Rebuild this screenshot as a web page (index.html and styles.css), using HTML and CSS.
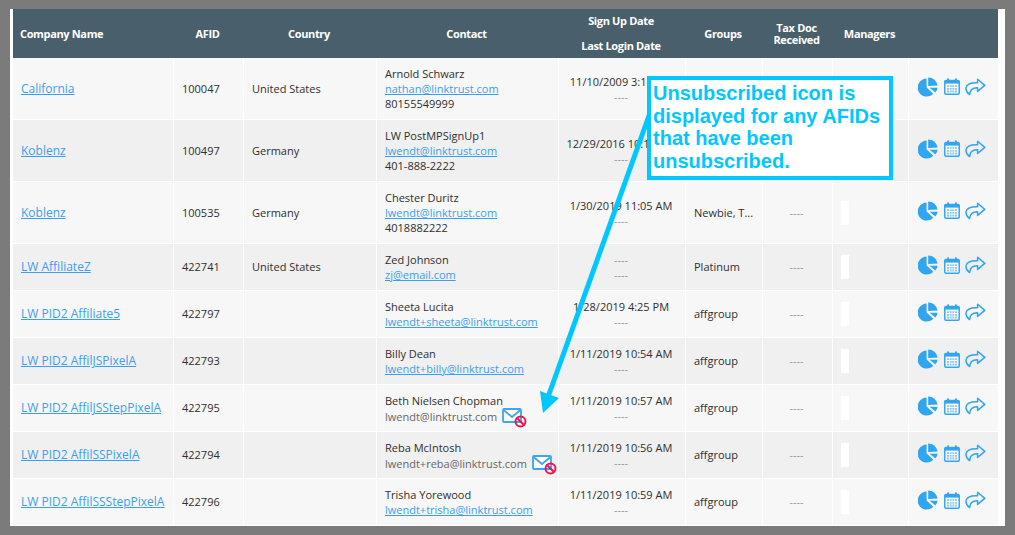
FILE: index.html
```html
<!DOCTYPE html>
<html lang="en">
<head>
<meta charset="utf-8">
<title>Affiliates</title>
<link rel="stylesheet" href="styles.css">
</head>
<body>
<svg class="defs" width="0" height="0" aria-hidden="true">
  <symbol id="i-pie" viewBox="0 0 20 20">
    <path d="M8.6 10.6V1.6A9 9 0 1 0 15.3 16.7Z"/>
    <path d="M10.2 0.4A9.2 9.2 0 0 1 19.6 8.6L10.2 9Z"/>
    <path d="M11.6 10.8H19.6A9 9 0 0 1 17.4 15.6Z"/>
  </symbol>
  <symbol id="i-cal" viewBox="0 0 16 17">
    <rect class="cal-frame" x="0.8" y="2.6" width="14.4" height="13.6" rx="1.2"/>
    <rect x="0.8" y="2.6" width="14.4" height="3"/>
    <rect x="3.2" y="0.4" width="1.8" height="3"/>
    <rect x="11" y="0.4" width="1.8" height="3"/>
    <path class="cal-grid" d="M3 7.2h10v1.8H3zM3 9.9h10v1.8H3zM3 12.6h10v1.8H3z"/>
    <path class="cal-lines" d="M5.5 7v7.6M8 7v7.6M10.5 7v7.6"/>
  </symbol>
  <symbol id="i-share" viewBox="0 0 21 18">
    <path class="share" d="M12.6 1.2L19.8 7.4L12.6 13.4V9.8C8.2 9.6 5 11 4.6 16.6C1.8 14.6 0.8 12.4 1 10C1.5 6.2 6 4.6 12.6 4.8Z"/>
  </symbol>
  <symbol id="i-env" viewBox="0 0 20 15">
    <rect class="env" x="1" y="1" width="18" height="13" rx="1"/>
    <path class="env" d="M1.5 2L10 9L18.5 2"/>
  </symbol>
  <symbol id="i-ban" viewBox="0 0 12 12">
    <circle class="ban" cx="6" cy="6" r="4.6"/>
    <path class="ban" d="M3 3L9 9"/>
  </symbol>
</svg>
<main class="frame">
  <table class="grid">
    <colgroup>
      <col class="c1"><col class="c2"><col class="c3"><col class="c4"><col class="c5"><col class="c6"><col class="c7"><col class="c8"><col class="c9">
    </colgroup>
    <thead>
      <tr>
        <th class="left">Company Name</th>
        <th>AFID</th>
        <th>Country</th>
        <th>Contact</th>
        <th class="dates"><div>Sign Up Date</div><div>Last Login Date</div></th>
        <th>Groups</th>
        <th class="tax">Tax Doc<br>Received</th>
        <th>Managers</th>
        <th></th>
      </tr>
    </thead>
    <tbody>
      <tr class="tall">
        <td><a class="co" href="#">California</a></td><td>100047</td><td>United States</td>
        <td><div>Arnold Schwarz</div><a href="#">nathan@linktrust.com</a><div>80155549999</div></td>
        <td class="ctr"><div>11/10/2009 3:15 PM</div><div class="dash">----</div></td>
        <td></td><td class="ctr dash">----</td><td><span class="mgr"></span></td>
        <td class="acts"><svg class="pie"><use href="#i-pie"/></svg><svg class="cal"><use href="#i-cal"/></svg><svg class="shr"><use href="#i-share"/></svg></td>
      </tr>
      <tr class="tall">
        <td><a class="co" href="#">Koblenz</a></td><td>100497</td><td>Germany</td>
        <td><div>LW PostMPSignUp1</div><a href="#">lwendt@linktrust.com</a><div>401-888-2222</div></td>
        <td class="ctr"><div>12/29/2016 10:15 AM</div><div class="dash">----</div></td>
        <td></td><td class="ctr dash">----</td><td><span class="mgr"></span></td>
        <td class="acts"><svg class="pie"><use href="#i-pie"/></svg><svg class="cal"><use href="#i-cal"/></svg><svg class="shr"><use href="#i-share"/></svg></td>
      </tr>
      <tr class="tall">
        <td><a class="co" href="#">Koblenz</a></td><td>100535</td><td>Germany</td>
        <td><div>Chester Duritz</div><a href="#">lwendt@linktrust.com</a><div>4018882222</div></td>
        <td class="ctr"><div>1/30/2019 11:05 AM</div><div class="dash">----</div></td>
        <td>Newbie, T...</td><td class="ctr dash">----</td><td><span class="mgr"></span></td>
        <td class="acts"><svg class="pie"><use href="#i-pie"/></svg><svg class="cal"><use href="#i-cal"/></svg><svg class="shr"><use href="#i-share"/></svg></td>
      </tr>
      <tr>
        <td><a class="co" href="#">LW AffiliateZ</a></td><td>422741</td><td>United States</td>
        <td><div>Zed Johnson</div><a href="#">zj@email.com</a></td>
        <td class="ctr"><div class="dash">----</div><div class="dash">----</div></td>
        <td>Platinum</td><td class="ctr dash">----</td><td><span class="mgr"></span></td>
        <td class="acts"><svg class="pie"><use href="#i-pie"/></svg><svg class="cal"><use href="#i-cal"/></svg><svg class="shr"><use href="#i-share"/></svg></td>
      </tr>
      <tr>
        <td><a class="co" href="#">LW PID2 Affiliate5</a></td><td>422797</td><td></td>
        <td><div>Sheeta Lucita</div><a href="#">lwendt+sheeta@linktrust.com</a></td>
        <td class="ctr"><div>1/28/2019 4:25 PM</div><div class="dash">----</div></td>
        <td>affgroup</td><td class="ctr dash">----</td><td><span class="mgr"></span></td>
        <td class="acts"><svg class="pie"><use href="#i-pie"/></svg><svg class="cal"><use href="#i-cal"/></svg><svg class="shr"><use href="#i-share"/></svg></td>
      </tr>
      <tr>
        <td><a class="co" href="#">LW PID2 AffilJSPixelA</a></td><td>422793</td><td></td>
        <td><div>Billy Dean</div><a href="#">lwendt+billy@linktrust.com</a></td>
        <td class="ctr"><div>1/11/2019 10:54 AM</div><div class="dash">----</div></td>
        <td>affgroup</td><td class="ctr dash">----</td><td><span class="mgr"></span></td>
        <td class="acts"><svg class="pie"><use href="#i-pie"/></svg><svg class="cal"><use href="#i-cal"/></svg><svg class="shr"><use href="#i-share"/></svg></td>
      </tr>
      <tr>
        <td><a class="co" href="#">LW PID2 AffilJSStepPixelA</a></td><td>422795</td><td></td>
        <td><div>Beth Nielsen Chopman</div><div class="unsub">lwendt@linktrust.com<span class="unsub-icon"><svg class="env-i"><use href="#i-env"/></svg><svg class="ban-i"><use href="#i-ban"/></svg></span></div></td>
        <td class="ctr"><div>1/11/2019 10:57 AM</div><div class="dash">----</div></td>
        <td>affgroup</td><td class="ctr dash">----</td><td><span class="mgr"></span></td>
        <td class="acts"><svg class="pie"><use href="#i-pie"/></svg><svg class="cal"><use href="#i-cal"/></svg><svg class="shr"><use href="#i-share"/></svg></td>
      </tr>
      <tr>
        <td><a class="co" href="#">LW PID2 AffilSSPixelA</a></td><td>422794</td><td></td>
        <td><div>Reba McIntosh</div><div class="unsub">lwendt+reba@linktrust.com<span class="unsub-icon"><svg class="env-i"><use href="#i-env"/></svg><svg class="ban-i"><use href="#i-ban"/></svg></span></div></td>
        <td class="ctr"><div>1/11/2019 10:56 AM</div><div class="dash">----</div></td>
        <td>affgroup</td><td class="ctr dash">----</td><td><span class="mgr"></span></td>
        <td class="acts"><svg class="pie"><use href="#i-pie"/></svg><svg class="cal"><use href="#i-cal"/></svg><svg class="shr"><use href="#i-share"/></svg></td>
      </tr>
      <tr>
        <td><a class="co" href="#">LW PID2 AffilSSStepPixelA</a></td><td>422796</td><td></td>
        <td><div>Trisha Yorewood</div><a href="#">lwendt+trisha@linktrust.com</a></td>
        <td class="ctr"><div>1/11/2019 10:59 AM</div><div class="dash">----</div></td>
        <td>affgroup</td><td class="ctr dash">----</td><td><span class="mgr"></span></td>
        <td class="acts"><svg class="pie"><use href="#i-pie"/></svg><svg class="cal"><use href="#i-cal"/></svg><svg class="shr"><use href="#i-share"/></svg></td>
      </tr>
    </tbody>
  </table>
  <svg class="arrow" width="995" height="517" viewBox="0 0 995 517" aria-hidden="true">
    <path class="arrow-line" d="M645 90L538 388"/>
    <path class="arrow-head" d="M530 382L549 389L533 404Z"/>
  </svg>
  <aside class="callout">Unsubscribed icon is displayed for any AFIDs that have been unsubscribed.</aside>
</main>
</body>
</html>
```

FILE: styles.css
```css
html, body { margin: 0; padding: 0; }
body {
  background: #7b7b7b;
  width: 1015px;
  height: 535px;
  overflow: hidden;
  font-family: "Open Sans", "Liberation Sans", sans-serif;
  color: #2f2f2f;
}
.defs { position: absolute; }
.frame {
  position: relative;
  box-sizing: border-box;
  width: 995px;
  height: 517px;
  margin: 9px 0 0 10px;
  padding: 0 7px 0 3px;
  background: #fff;
}
.grid {
  table-layout: fixed;
  width: 985px;
  border-collapse: separate;
  border-spacing: 0;
  font-size: 11px;
  line-height: 15px;
}
.c1 { width: 161px; }
.c2 { width: 70px; }
.c3 { width: 133px; }
.c4 { width: 182px; }
.c5 { width: 127px; }
.c6 { width: 77px; }
.c7 { width: 70px; }
.c8 { width: 76px; }
.c9 { width: 89px; }

thead th {
  height: 49px;
  padding: 0 3px 0 0;
  background: #4a5f6c;
  color: #fff;
  font-size: 11px;
  font-weight: 700;
  letter-spacing: -0.35px;
  text-align: center;
  vertical-align: middle;
}
thead th.left { text-align: left; padding: 0 0 0 7px; }
th.dates { line-height: 24.5px; }
th.tax { line-height: 12px; }

tbody td {
  box-sizing: border-box;
  height: 47px;
  padding: 0 4px 0 8px;
  border-right: 1px solid #fff;
  border-bottom: 1px solid #fff;
  vertical-align: middle;
  white-space: nowrap;
  overflow: hidden;
}
tbody tr:not(.tall) td:nth-child(-n+3),
tbody tr:not(.tall) td:nth-child(6) { padding-bottom: 1px; }
tbody tr.tall td { height: 62px; }
tbody td:last-child { border-right: 0; }
tbody tr:nth-child(odd) td { background: #f7f7f7; }
tbody tr:nth-child(even) td { background: #f0f0f0; }

a { color: #3b9ff0; text-decoration: underline; }
a.co { font-size: 12px; }
tbody td.ctr { padding: 0 2px 0 0; text-align: center; }
tbody tr:not(.tall) td.dash { padding-bottom: 1px; }
.dash { color: #999; }
.mgr {
  display: block;
  width: 8px;
  height: 24px;
  background: #fff;
}
.unsub { color: #666; }
.unsub-icon {
  position: relative;
  display: inline-block;
  width: 21px;
  height: 14px;
  margin-left: 5px;
  vertical-align: -1px;
}
.env-i { position: absolute; left: 0; top: 0; width: 20px; height: 15px; }
.ban-i { position: absolute; left: 12px; top: 7px; width: 13px; height: 13px; }
.env { fill: #fff; stroke: #3ea6ee; stroke-width: 1.8; }
.ban { fill: none; stroke: #e8174f; stroke-width: 1.8; }

tbody td.acts {
  padding: 0 0 4px 9px;
  overflow: visible;
}
.acts svg { display: inline-block; vertical-align: middle; fill: #31a5ee; }
.pie { width: 20px; height: 20px; margin-right: 6px; }
.cal { width: 16px; height: 17px; margin-right: 5px; }
.shr { width: 21px; height: 18px; }
.cal-frame { fill: #fff; stroke: #31a5ee; stroke-width: 1.5; }
.cal-grid { fill: #8cc8f2; }
.cal-lines { stroke: #fff; stroke-width: 0.7; fill: none; }
.share { fill: none; stroke: #31a5ee; stroke-width: 1.5; stroke-linejoin: round; }

.arrow { position: absolute; left: 0; top: 0; pointer-events: none; }
.arrow-line { stroke: #00c8ff; stroke-width: 5; fill: none; }
.arrow-head { fill: #00c8ff; }
.callout {
  position: absolute;
  left: 637px;
  top: 67px;
  box-sizing: border-box;
  width: 246px;
  height: 104px;
  padding: 2px 2px 0 2px;
  background: #fff;
  border: 4px solid #00c8ff;
  color: #00c8ff;
  font-family: "Liberation Sans", Arial, sans-serif;
  font-size: 20px;
  font-weight: 700;
  line-height: 22.7px;
}
```
